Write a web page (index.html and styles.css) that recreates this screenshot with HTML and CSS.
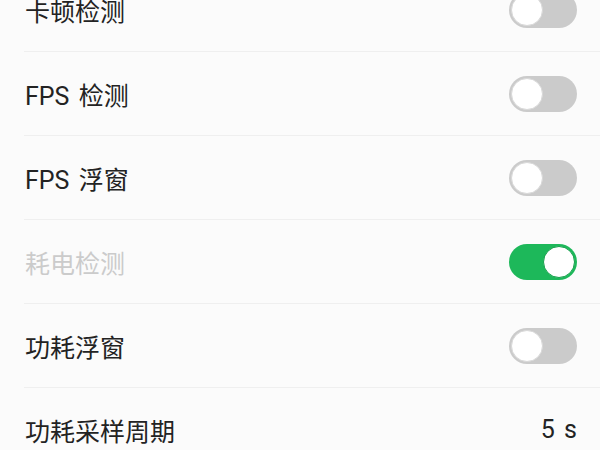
FILE: index.html
```html
<!DOCTYPE html>
<html lang="zh-CN">
<head>
<meta charset="UTF-8">
<title>性能检测设置</title>
<link rel="stylesheet" href="styles.css">
</head>
<body>
<ul class="setting-list">
<li class="setting-item">
<span class="label">卡顿检测</span>
<span class="switch"></span>
</li>
<li class="setting-item">
<span class="label">FPS 检测</span>
<span class="switch"></span>
</li>
<li class="setting-item">
<span class="label">FPS 浮窗</span>
<span class="switch"></span>
</li>
<li class="setting-item disabled">
<span class="label">耗电检测</span>
<span class="switch on"></span>
</li>
<li class="setting-item">
<span class="label">功耗浮窗</span>
<span class="switch"></span>
</li>
<li class="setting-item">
<span class="label">功耗采样周期</span>
<span class="value">5 s</span>
</li>
</ul>
</body>
</html>
```
FILE: styles.css
```css
html, body { margin: 0; padding: 0; background: #fbfbfb; font-family: Roboto, "Noto Sans CJK SC", sans-serif; overflow: hidden; }
.setting-list { list-style: none; margin: -32px 0 0; padding: 0 0 0 24px; }
.setting-item { display: flex; align-items: center; justify-content: space-between; height: 83px; padding-right: 23px; border-bottom: 1px solid #efefef; }
.label { font-size: 25px; color: #232323; padding-left: 1px; word-spacing: 3px; }
.disabled .label { color: #cbcbcb; }
.value { font-size: 25px; color: #232323; word-spacing: 3px; }
.switch { position: relative; width: 68px; height: 36px; border-radius: 18px; background: #cbcbcb; box-sizing: border-box; }
.switch::after { content: ''; position: absolute; left: 2px; top: 2px; width: 32px; height: 32px; border-radius: 50%; background: #fff; box-sizing: border-box; border: 1px solid #d8d8d8; }
.switch.on { background: #1db85a; }
.switch.on::after { left: 34px; border-color: #16a04c; }
```
